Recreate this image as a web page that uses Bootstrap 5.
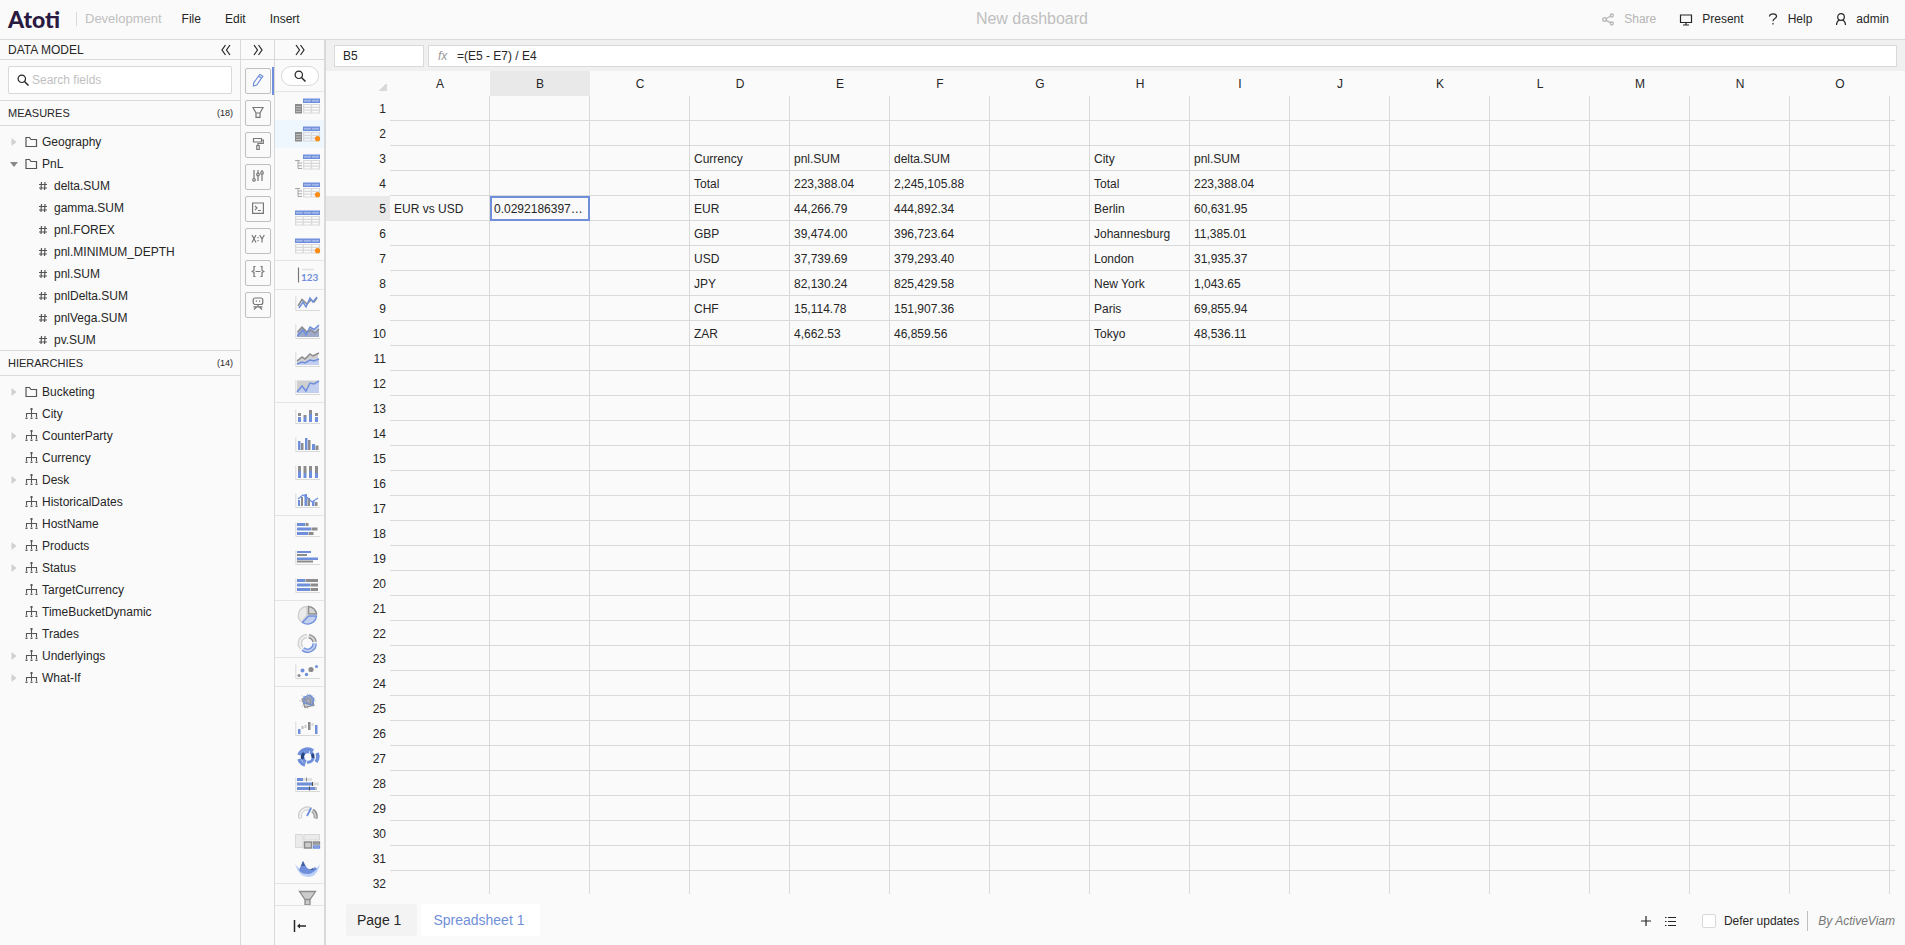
<!DOCTYPE html>
<html lang="en">
<head>
<meta charset="utf-8">
<meta name="viewport" content="width=device-width, initial-scale=1">
<title>New dashboard</title>
<link href="https://cdn.jsdelivr.net/npm/bootstrap@5.3.0/dist/css/bootstrap.min.css" rel="stylesheet">
<style>
  :root { --line: #d9d9d9; --accent: #6f8fdb; --ink: #262626; --page: #fafafa; }
  body { font-family: "Liberation Sans", Arial, sans-serif; font-size: 12px; line-height: 18px; color: var(--ink); background: var(--page); }
  a { color: inherit; text-decoration: none; }
  svg { display: block; flex: none; }
  button { padding: 0; color: inherit; background: none; border: 0; }
  .ln-b { border-bottom: 1px solid var(--line); }
  .ln-t { border-top: 1px solid var(--line); }
  .stroke { fill: none; stroke: currentColor; }

  .topbar { flex: 0 0 40px; padding: 0 16px 2px 8px; }
  .brand { width: 68px; font: 900 23px/36px Lato, sans-serif; color: #2a1a42; }
  .env { padding-left: 8px; margin-right: 20px; border-left: 1px solid var(--line); font-size: 13px; line-height: 14px; color: #bfbfbf; }
  .menu { gap: 24px; }
  .dash-title { padding-left: 163px; font-size: 16px; color: #bfbfbf; }
  .actions { gap: 23px; }
  .actions button { display: flex; align-items: center; gap: 9px; }
  .actions button:disabled { color: #b5b5b5; }

  .model { flex: 0 0 241px; border-right: 1px solid var(--line); }
  .head { flex: 0 0 20px; }
  .band { flex: none; height: 25px; padding: 0 7px 0 8px; font-size: 11px; }
  .band small { font-size: 9px; }
  .field-search { height: 28px; margin: 6px 8px; padding: 0 8px; gap: 3px; background: #fff; border: 1px solid var(--line); border-radius: 2px; }
  .field-search input { font-size: 12px; padding: 0; border: 0; outline: 0; min-width: 0; }
  .field-search input::placeholder { color: #bfbfbf; }
  .tree { list-style: none; margin: 0; padding: 5px 0 0 8px; overflow: hidden; }
  .tree.measures { flex: 0 0 225px; }
  .tree li { display: flex; align-items: center; gap: 4px; height: 22px; }
  .tree .caret { width: 12px; }
  .tree .child { padding-left: 28px; }
  .tree svg { color: #555; }

  .tools { flex: 0 0 34px; border-right: 1px solid var(--line); }
  .tool-list { padding: 8px 0 0 4px; gap: 6px; }
  .tool { width: 26px; height: 26px; display: grid; place-items: center; padding-bottom: 3px; color: #777; border: 1px solid #bfbfbf; border-radius: 2px; }
  .tool svg { stroke-width: 1.2; }
  .tool-on { width: 29px; padding: 0; margin: -1px 0; border-right: 2px solid var(--accent); height: 28px; }
  .tool-on .tool { color: var(--accent); margin-top: 1px; }

  .widgets { flex: 0 0 51px; border-right: 2px solid var(--line); }
  .pill { flex: none; width: 38px; height: 20px; margin: 6px 0 5px 6px; background: #fff; border: 1px solid var(--line); border-radius: 10px; display: grid; place-items: center; }
  .widget-list { overflow: hidden; border-top: 1px solid #e5e5e5; }
  .widget-group { border-bottom: 1px solid #e5e5e5; }
  .widget { display: block; width: 100%; height: 28px; padding: 4px 0 4px 20px; }
  .widget.picked { background: #eef6fe; }
  .collapse-bar { flex: 0 0 40px; border-top: 1px solid #e5e5e5; }

  .formula { flex: none; height: 31px; padding: 5px 8px 4px; gap: 4px; background: #f0f0f0; }
  .formula input { color: var(--ink); outline: 0; min-width: 0; }
  .cell-name { width: 90px; padding: 0 8px; border: 1px solid var(--line); }
  .fx-box { padding-left: 9px; background: #fff; border: 1px solid var(--line); }
  .fx-box label { width: 19px; font: italic 12px/20px "Liberation Sans", sans-serif; color: #999; }
  .fx-box input { border: 0; padding: 0; }

  .sheet-wrap { overflow: hidden; padding-right: 10px; }
  .sheet { table-layout: fixed; width: 100%; border-collapse: separate; border-spacing: 0; }
  .sheet tr { height: 25px; }
  .sheet th { font-weight: 400; text-align: center; padding: 0; }
  .sheet tbody th { text-align: right; padding-right: 4px; }
  .sheet td { padding: 2px 3px 0 4px; border-right: 1px solid var(--line); border-bottom: 1px solid var(--line); white-space: nowrap; overflow: hidden; text-overflow: ellipsis; }
  .sheet td:last-child { border-right: 0; }
  .sheet .on { background: #e9e9e9; }
  .sheet td.selected { border-color: var(--accent); box-shadow: inset 2px 2px var(--accent), inset -1px -1px var(--accent); }
  .rowcol { width: 64px; } .datacol { width: 100px; }
  .corner { width: 8px; height: 8px; margin: 7px 3px 0 auto; background: linear-gradient(135deg, transparent 50%, var(--line) 50%); }

  .footbar { flex: 0 0 51px; padding: 10px 10px 8px 20px; }
  .page-tab { height: 32px; padding: 0 16px 0 11px; font-size: 14px; background: #f3f3f3; border-radius: 3px; }
  .page-tab.current { background: #fff; color: var(--accent); padding-left: 12px; }
  .sheet-list { margin: 0 25px 0 13px; }
  .defer input { appearance: none; width: 14px; height: 14px; margin: 0; background: #fff; border: 1px solid var(--line); border-radius: 2px; }
  .by { padding-left: 10px; margin-left: 8px; line-height: 20px; border-left: 1px solid #bfbfbf; color: #777; }
</style>
</head>
<body class="vh-100 d-flex flex-column overflow-hidden">

<header class="topbar ln-b d-flex align-items-center">
  <a class="brand" href="#">Atoti</a>
  <span class="env">Development</span>
  <nav class="menu d-flex"><button>File</button><button>Edit</button><button>Insert</button></nav>
  <div class="dash-title flex-fill text-center">New dashboard</div>
  <div class="actions d-flex">
    <button disabled><svg class="stroke" width="14" height="14" viewBox="0 0 14 14"><g stroke-width="1.300"><circle cx="3.500" cy="7.500" r="1.800"/><circle cx="10.800" cy="3.500" r="1.500"/><circle cx="10.800" cy="11.500" r="1.500"/><path d="M5 6.700 9.400 4.300M5 8.400l4.400 2.300"/></g></svg>Share</button>
    <button><svg class="stroke" width="14" height="14" viewBox="0 0 14 14"><path d="M1.500 3h11v7.500h-11zM7 10.500v2M4 13h6" stroke-width="1.200"/></svg>Present</button>
    <button><svg class="stroke" width="12" height="14" viewBox="0 0 12 14"><path d="M2.500 4.500C2.500 1 9.500 1 9.500 4.500 9.500 6.700 6 6.500 6 9.300M6 11v1.500" stroke-width="1.200"/></svg>Help</button>
    <button><svg class="stroke" width="12" height="14" viewBox="0 0 12 14"><circle cx="6" cy="5" r="3.300" stroke-width="1.200"/><path d="M1.500 13c0-2.500 1-4 2.800-5M10.500 13c0-2.500-1-4-2.800-5" stroke-width="1.200"/></svg>admin</button>
  </div>
</header>

<div class="d-flex flex-fill overflow-hidden">

  <aside class="model d-flex flex-column">
    <div class="head ln-b d-flex align-items-center justify-content-between px-2">
      <span>DATA MODEL</span>
      <button aria-label="Collapse data model"><svg class="stroke" width="12" height="12" viewBox="0 0 12 12"><path d="M5.500 1 2 6l3.500 5M10 1 6.500 6 10 11" stroke-width="1.200"/></svg></button>
    </div>
    <div class="field-search d-flex align-items-center">
      <label for="fields"><svg class="stroke" width="12" height="12" viewBox="0 0 12 12"><circle cx="4.800" cy="4.800" r="3.700" stroke-width="1.200"/><path d="m7.500 7.500 4 4" stroke-width="1.500"/></svg></label>
      <input id="fields" class="flex-fill" placeholder="Search fields">
    </div>
    <div class="band ln-t d-flex align-items-center justify-content-between"><span>MEASURES</span><small>(18)</small></div>
    <ul class="tree measures ln-t" id="measures"></ul>
    <div class="band ln-t d-flex align-items-center justify-content-between"><span>HIERARCHIES</span><small>(14)</small></div>
    <ul class="tree ln-t flex-fill" id="hierarchies"></ul>
  </aside>

  <aside class="tools d-flex flex-column">
    <button class="head ln-b d-flex align-items-center justify-content-center" aria-label="Expand tools"><svg class="stroke" width="12" height="12" viewBox="0 0 12 12"><path d="M2 1l3.500 5L2 11M6.500 1 10 6l-3.500 5" stroke-width="1.200"/></svg></button>
    <div class="tool-list d-flex flex-column">
      <div class="tool-on"><button class="tool" aria-label="Edit"><svg class="stroke" width="12" height="14" viewBox="0 0 12 14"><path d="M7.800 1.500 10.800 3.200 4.800 12 1.500 13 1.600 10zM6.500 3.200l3 1.900"/></svg></button></div>
      <button class="tool" aria-label="Filters"><svg class="stroke" width="12" height="12" viewBox="0 0 12 12"><path d="M1 1.500h10L8 7H4zM4 7v4.400h4V7"/></svg></button>
      <button class="tool" aria-label="Style"><svg class="stroke" width="12" height="14" viewBox="0 0 12 14"><path d="M1.500 1.500h8v3.500h-8zM9.500 3h1.800v3.500H6v2M4.800 8.500h2.400v4H4.800z"/></svg></button>
      <button class="tool" aria-label="Settings"><svg class="stroke" width="12" height="14" viewBox="0 0 12 14"><path d="M2 1v8.500M6 1v3M6 7v5M10 1v1.500M10 6v6"/><circle cx="2" cy="10.800" r="1.300"/><circle cx="6" cy="5.500" r="1.300"/><circle cx="10" cy="4" r="1.300"/></svg></button>
      <button class="tool" aria-label="Console"><svg class="stroke" width="12" height="12" viewBox="0 0 12 12"><path d="M.6 1h10.800v10.400H.6zM3 4l2 2-2 2M6 8.500h3"/></svg></button>
      <button class="tool" aria-label="Variables"><svg class="stroke" width="14" height="14" viewBox="0 0 14 14"><path d="m1 2 4 7.500M5 2 1 9.500M7 4v1.200M7 7v1.200M8.700 2 11 6v3.500M13.300 2 11 6"/></svg></button>
      <button class="tool" aria-label="Query"><svg class="stroke" width="14" height="14" viewBox="0 0 14 14"><path d="M4.500 1.500H3v4L1.200 6.500 3 7.500v4h1.500M9.500 1.500H11v4l1.800 1-1.800 1v4H9.500M4.500 6.500h5"/></svg></button>
      <button class="tool" aria-label="Assistant"><svg class="stroke" width="12" height="14" viewBox="0 0 12 14"><rect x="1.200" y="1" width="9.600" height="6.500" rx="2"/><path d="M3.800 4.200h1.200M7 4.200h1.200M6 7.500V10M1.500 9.800h9M2 12.500 4.500 10M10 12.500 7.500 10"/></svg></button>
    </div>
  </aside>

  <aside class="widgets d-flex flex-column">
    <button class="head ln-b d-flex align-items-center justify-content-center" aria-label="Expand widgets"><svg class="stroke" width="12" height="12" viewBox="0 0 12 12"><path d="M2 1l3.500 5L2 11M6.500 1 10 6l-3.500 5" stroke-width="1.200"/></svg></button>
    <button class="pill" aria-label="Search widgets"><svg class="stroke" width="12" height="12" viewBox="0 0 12 12"><circle cx="4.800" cy="4.800" r="3.700" stroke-width="1.200"/><path d="m7.500 7.500 4 4" stroke-width="1.500"/></svg></button>
    <div class="widget-list flex-fill" id="widgets"></div>
    <button class="collapse-bar d-flex align-items-center ps-3" aria-label="Collapse"><svg class="stroke" width="18" height="14" viewBox="0 0 18 14"><path d="M3.500 1v12" stroke-width="1.500"/><path d="M7 7h8" stroke-width="1.500"/><path d="m6 7 3-2.500v5z" fill="currentColor" stroke="none"/></svg></button>
  </aside>

  <main class="flex-fill d-flex flex-column overflow-hidden">
    <div class="formula d-flex">
      <input class="cell-name" aria-label="Cell" value="B5">
      <div class="fx-box flex-fill d-flex"><label for="fx"><i>fx</i></label><input id="fx" class="flex-fill" value="=(E5 - E7) / E4"></div>
    </div>
    <div class="sheet-wrap flex-fill">
      <table class="sheet" id="sheet"></table>
    </div>
    <footer class="footbar d-flex align-items-start justify-content-between">
      <nav class="d-flex gap-1">
        <button class="page-tab">Page 1</button>
        <button class="page-tab current">Spreadsheet 1</button>
      </nav>
      <div class="d-flex align-items-center h-100">
        <button aria-label="Add page"><svg class="stroke" width="12" height="12" viewBox="0 0 12 12"><path d="M6 1v10M1 6h10" stroke-width="1.200"/></svg></button>
        <button class="sheet-list" aria-label="List pages"><svg class="stroke" width="12" height="12" viewBox="0 0 12 12"><path d="M3 2.500h8M3 6.500h8M3 10.500h8M0 2.500h1.500M0 6.500h1.500M0 10.500h1.500"/></svg></button>
        <label class="defer d-flex align-items-center gap-2"><input type="checkbox">Defer updates</label>
        <a class="by fst-italic" href="#">By ActiveViam</a>
      </div>
    </footer>
  </main>
</div>

<script src="https://cdn.jsdelivr.net/npm/bootstrap@5.3.0/dist/js/bootstrap.bundle.min.js"></script>
<script>
  // ---- field trees ----
  const svg = (w, h, body) => `<svg width="${w}" height="${h}" viewBox="0 0 ${w} ${h}">${body}</svg>`;
  const shape = {
    closed: svg(12, 12, '<path d="M3.500 2v8l5-4z" fill="#d0d0d0"/>'),
    open: svg(12, 12, '<path d="M2 4h8L6 9z" fill="#888"/>'),
    none: '<span class="caret"></span>',
    folder: svg(14, 12, '<path class="stroke" d="M2 1.500h3.500L7 3.500h5.500v7H2z" stroke-width="1.200"/>'),
    hash: svg(14, 12, '<path class="stroke" d="M5.500 2 5 10M9 2l-.5 8M3 4.500h8M3 8h8" stroke-width="1.200"/>'),
    hier: svg(14, 12, '<path class="stroke" d="M7.500 1v8M2.500 9V5.500h10V9" stroke-width="1.100"/><path fill="#555" d="M6.500 0h2v2h-2zM1.500 9.500h2v1.500h-2zM6.500 9.500h2v1.500h-2zM11.500 9.500h2v1.500h-2z"/>')
  };
  const row = (caret, icon, name) => `<li>${shape[caret]}${shape[icon]}<span>${name}</span></li>`;
  document.getElementById('measures').innerHTML = row('closed', 'folder', 'Geography') + row('open', 'folder', 'PnL') +
    ['delta.SUM', 'gamma.SUM', 'pnl.FOREX', 'pnl.MINIMUM_DEPTH', 'pnl.SUM', 'pnlDelta.SUM', 'pnlVega.SUM', 'pv.SUM']
      .map(n => `<li class="child">${shape.hash}<span>${n}</span></li>`).join('');
  document.getElementById('hierarchies').innerHTML = row('closed', 'folder', 'Bucketing') +
    ['City', '+CounterParty', 'Currency', '+Desk', 'HistoricalDates', 'HostName', '+Products', '+Status',
     'TargetCurrency', 'TimeBucketDynamic', 'Trades', '+Underlyings', '+What-If']
      .map(n => row(n[0] === '+' ? 'closed' : 'none', 'hier', n.replace('+', ''))).join('');

  // ---- widget thumbnails: B blue, G dark grey, L light grey ----
  const B = '#6f8fdb', G = '#8c8c8c', L = '#d9d9d9', P = '#c3cfef';
  const rect = (x, y, w, h, f) => `<rect x="${x}" y="${y}" width="${w}" height="${h}" fill="${f}"/>`;
  const path = (d, s, w = 1.5, f = 'none') => `<path d="${d}" stroke="${s}" stroke-width="${w}" fill="${f}"/>`;
  const axes = path('M.8 2.500v14H25', L, 1);
  const dot = '<circle cx="22.500" cy="14.700" r="2.600" fill="#fa8c16"/>';
  const grid = x => rect(x, 2.5, 25 - x, 4.5, B) + path(`M${x + 1} 4.800H24`, '#a3b7ea', 1.8) +
    path([1, 2].slice(x ? 1 : 0).map(i => `M${x ? 16.5 : 25 * i / 3} 3v4`).join('') + (x ? '' : 'M8.300 3v4'), B, 1) +
    path(`M${x + .6} 8.500H24.500V17H${x + .6}zM${x} 11.300H25M${x} 14.200H25` + (x ? 'M16.500 8.500V17' : 'M8.300 8.500V17M16.600 8.500V17'), L, 1.2);
  const pivot = rect(0, 8, 7, 9.5, G) + path('M1 10.500h5M1 13h5M1 15.500h5', '#c9c9c9', .8) + grid(8);
  const treeT = path('M0 8.500h5M3 8.500v8M3 11h4M3 13.800h4M3 16.500h4', '#a6a6a6', 1) + grid(8);
  const table = grid(0);
  const up = 'M2.500 14 8 8l3 5 4-8 4 2.500 5-4.500', low = 'M2.500 10 7 5l5 5 4-2 4 3 4-4';
  const bars = (list) => list.map(a => rect(...a)).join('');
  const groups = [
    [pivot, '*' + pivot + dot, treeT, treeT + dot, table, table + dot],
    [path('M3.500 2.500v15', '#777', 1.2) + path('M7 4.500h12', '#e2e2e2', 1.5) + `<text x="6" y="16" font-size="10" font-weight="700" font-family="Lato, sans-serif" fill="${B}">123</text>`],
    [axes + path('M3 12 7 5.500 12 10l4-4 3 2 3-4', G) + path('M4 14l4-6 3 5 4-9 3 4 4-5', B),
     axes + path(up + 'V15H2z', 'none', 0, P) + path(low + 'V15H2z', 'none', 0, '#9eaacb') + path(low, G) + path(up, B),
     axes + path('M2 10 7 7l3 1 5-4 3 1 5-2V15H2z', 'none', 0, '#d0d0d0') + path('M2 15v-2l9-1 5-3h8v6z', 'none', 0, P) + path('M2 11 7 7l3 2 5-5 3 2 6-3', G) + path('M2 14l5-2 3 1 5-3 4 1 5-2', B),
     axes + rect(2, 2.5, 22, 12.5, '#cfcfcf') + path('M2 15 8 8l3 4 4-8 4 2 5-3V15z', B, 0, P) + path('M2 14 7 8l4 5 4-8 4 1 5-3', B)],
    [axes + bars([[3, 6, 3, 3, G], [3, 10, 3, 5, B], [8.5, 8, 3, 2, G], [8.5, 10, 3, 5, B], [14, 3, 3, 4, G], [14, 7, 3, 8, B], [20, 6, 3, 3, G], [20, 10, 3, 5, B]]),
     axes + bars([[3, 6, 2.5, 9, B], [6, 8, 2.5, 7, G], [10, 3, 2.5, 12, B], [13, 5, 2.5, 10, G], [17, 9, 3, 6, B], [20.5, 10.5, 3, 4.5, G]]),
     axes + bars([3, 8.5, 14, 20].flatMap((x, i) => [[x, 3, 3, 5 + i % 2 * 2, G], [x, 8 + i % 2 * 2, 3, 7 - i % 2 * 2, B]])),
     axes + bars([[3, 9, 2, 6, B], [6, 6, 2, 9, G], [9.5, 3, 2.5, 12, B], [12.5, 7, 2.5, 8, G], [17, 10, 2.5, 5, B], [20, 11, 2.5, 4, G]]) + path('M3 8 8 4l5 3 4 4 6-4', B, 1.2)],
    [axes + bars([[2, 3, 8, 3, B], [10.5, 3, 3, 3, G], [2, 7.5, 14, 3, B], [16.5, 7.5, 6, 3, G], [2, 12, 11, 3, B], [13.5, 12, 5, 3, G]]),
     axes + bars([[2, 3, 14, 2, B], [2, 6, 10, 2, G], [2, 9.5, 21, 2.5, B], [2, 12.5, 16, 2, G]]),
     axes + bars([3, 7.5, 12].flatMap((y, i) => [[2, y, i === 0 ? 8 : 13, 3, B], [i === 0 ? 10.5 : 15.5, y, i === 0 ? 12.5 : 7.5, 3, G]]))],
    [path('M12 1.500v9L6.500 17A8.800 8.800 0 0 1 12 1.500z', '#cfcfcf', 1.3, '#ebebeb') + path('M13.500 1.500v7.500h8A8.500 8.500 0 0 0 13.500 1.500z', G, 1.4, '#d4d4d4') + path('M21.500 11H13.500L7.500 17.500A9 9 0 0 0 21.500 11z', B, 1.4, P),
     path('M12 3.200A7 7 0 0 0 6.800 15', '#cfcfcf', 4.5) + path('M12 3.200A7 7 0 0 0 6.800 15', '#eee', 2) + path('M13.800 3.200A7 7 0 0 1 19.600 9', G, 4.5) + path('M13.800 3.200A7 7 0 0 1 19.600 9', '#d4d4d4', 2) + path('M19.600 10.500A7 7 0 0 1 8 16', B, 4.5) + path('M19.600 10.500A7 7 0 0 1 8 16', P, 2)],
    [axes + [[4, 13.5, 1.5, G], [7.5, 8.5, 2, B], [11.5, 12.5, 1.7, B], [16, 7.5, 2.6, G], [21.5, 4.5, 1.5, B]].map(c => `<circle cx="${c[0]}" cy="${c[1]}" r="${c[2]}" fill="${c[3]}"/>`).join('')],
    [path('M12.500 2v16M4 10h17M6.500 4l12 12M18.500 4l-12 12', '#c8c8c8', .8) + path('M7 8 16 5.500l3 8.500-9 2.500z', G, 1.2, '#ccc') + path('M9 6l6-2 4 4-2 6-8-2z', B, 1.3, '#8c9ccb99') + path('M10 8l5 0 1 4-4 0z', G, 1),
     axes + bars([[3, 10, 2.5, 5, B], [6.5, 7, 2, 3, '#bbb'], [9.5, 6, 2, 3, '#ccc'], [13, 3, 2.5, 8, G], [16.5, 4, 2, 3, L], [20, 6, 2.5, 9, B]]),
     `<path d="M4 8a9 9 0 0 1 14-4M22 6a9 9 0 0 1-1 9M4 12a9 9 0 0 0 6 6" stroke="${B}" stroke-width="3.500" fill="none"/><circle cx="13" cy="10" r="5.200" fill="none" stroke="${B}" stroke-width="3" stroke-dasharray="9 1 5 1"/><path d="M8 12a5 5 0 0 1 1-6M17 7a5 5 0 0 1 1 4" stroke="#26447f" stroke-width="3" fill="none"/>`,
     axes + bars([[2, 3, 15, 3, '#e0e0e0'], [2, 3, 6, 3, B], [2, 7.5, 22, 3, '#ddd'], [2, 7.5, 16, 3, B], [2, 12, 20, 3, '#bbb'], [2, 12, 18, 3, B], [11, 2.5, 1, 4, G], [17, 7, 1, 4, '#555'], [14, 11.5, 1, 4, '#555']]),
     path('M5.500 15.500a7.500 7.500 0 0 1 11-9', '#ccc', 4) + path('M5.500 15a7.500 7.500 0 0 1 11-8.500', '#f2f2f2', 1.8) + path('M17.500 7.500a7.500 7.500 0 0 1 3 8', G, 4) + path('M17.500 8a7.500 7.500 0 0 1 3 7', '#ccc', 1.8) + path('M12 13l4-8', B, 1.8),
     path('M.5 3.500h7.500v13H.5zM9 3.500h15.500v5.500H9z', L, 1, '#ebebeb') + path('M9.500 11h7v6h-7z', G, 1.5, '#ccc') + path('M18.500 11H24.500v2H18.500z', G, 1.3, '#ccc') + path('M18.500 15h6v2h-6z', B, 1.3, P),
     path('M0 5q5 7 13 7t12-7Q22 18 13 18 4 18 0 5z', 'none', 0, '#bcd0f7') + path('M4 11 8 2l4 7 4 2 4-3 2 2Q17 15 13 15 6 15 4 11z', 'none', 0, B) + path('M6 7l2-5 2 5zM14 11l4-2 1 2z', 'none', 0, '#44609f')],
    [path('M4.500 3.500H20.500L15 11.500H10zM10 11.500H15V17H10z', G, 1.3, '#ccc')]
  ];
  document.getElementById('widgets').innerHTML = groups.map(g => '<div class="widget-group">' +
    g.map(i => `<button class="widget${i[0] === '*' ? ' picked' : ''}" aria-label="Widget">${svg(26, 20, i.replace('*', ''))}</button>`).join('') + '</div>').join('');

  // ---- spreadsheet ----
  const letters = 'ABCDEFGHIJKLMNO'.split('');
  const cells = { A5: 'EUR vs USD', B5: '0.0292186397…' };
  const block = (col, first, rows) => rows.forEach((r, i) => r.forEach((v, j) => {
    cells[letters[letters.indexOf(col) + j] + (first + i)] = v;
  }));
  block('D', 3, [['Currency', 'pnl.SUM', 'delta.SUM'], ['Total', '223,388.04', '2,245,105.88'], ['EUR', '44,266.79', '444,892.34'],
    ['GBP', '39,474.00', '396,723.64'], ['USD', '37,739.69', '379,293.40'], ['JPY', '82,130.24', '825,429.58'],
    ['CHF', '15,114.78', '151,907.36'], ['ZAR', '4,662.53', '46,859.56']]);
  block('H', 3, [['City', 'pnl.SUM'], ['Total', '223,388.04'], ['Berlin', '60,631.95'], ['Johannesburg', '11,385.01'],
    ['London', '31,935.37'], ['New York', '1,043.65'], ['Paris', '69,855.94'], ['Tokyo', '48,536.11']]);
  let html = '<colgroup><col class="rowcol">' + letters.map(() => '<col class="datacol">').join('') + '<col></colgroup><thead><tr><th><div class="corner"></div></th>' +
    letters.map(l => `<th${l === 'B' ? ' class="on"' : ''}>${l}</th>`).join('') + '<th></th></tr></thead><tbody>';
  for (let r = 1; r <= 32; r++) {
    html += `<tr><th${r === 5 ? ' class="on"' : ''}>${r}</th>` +
      letters.map(l => `<td${l + r === 'B5' ? ' class="selected"' : ''}>${cells[l + r] || ''}</td>`).join('') + '<td></td></tr>';
  }
  document.getElementById('sheet').innerHTML = html + '</tbody>';
</script>
</body>
</html>
